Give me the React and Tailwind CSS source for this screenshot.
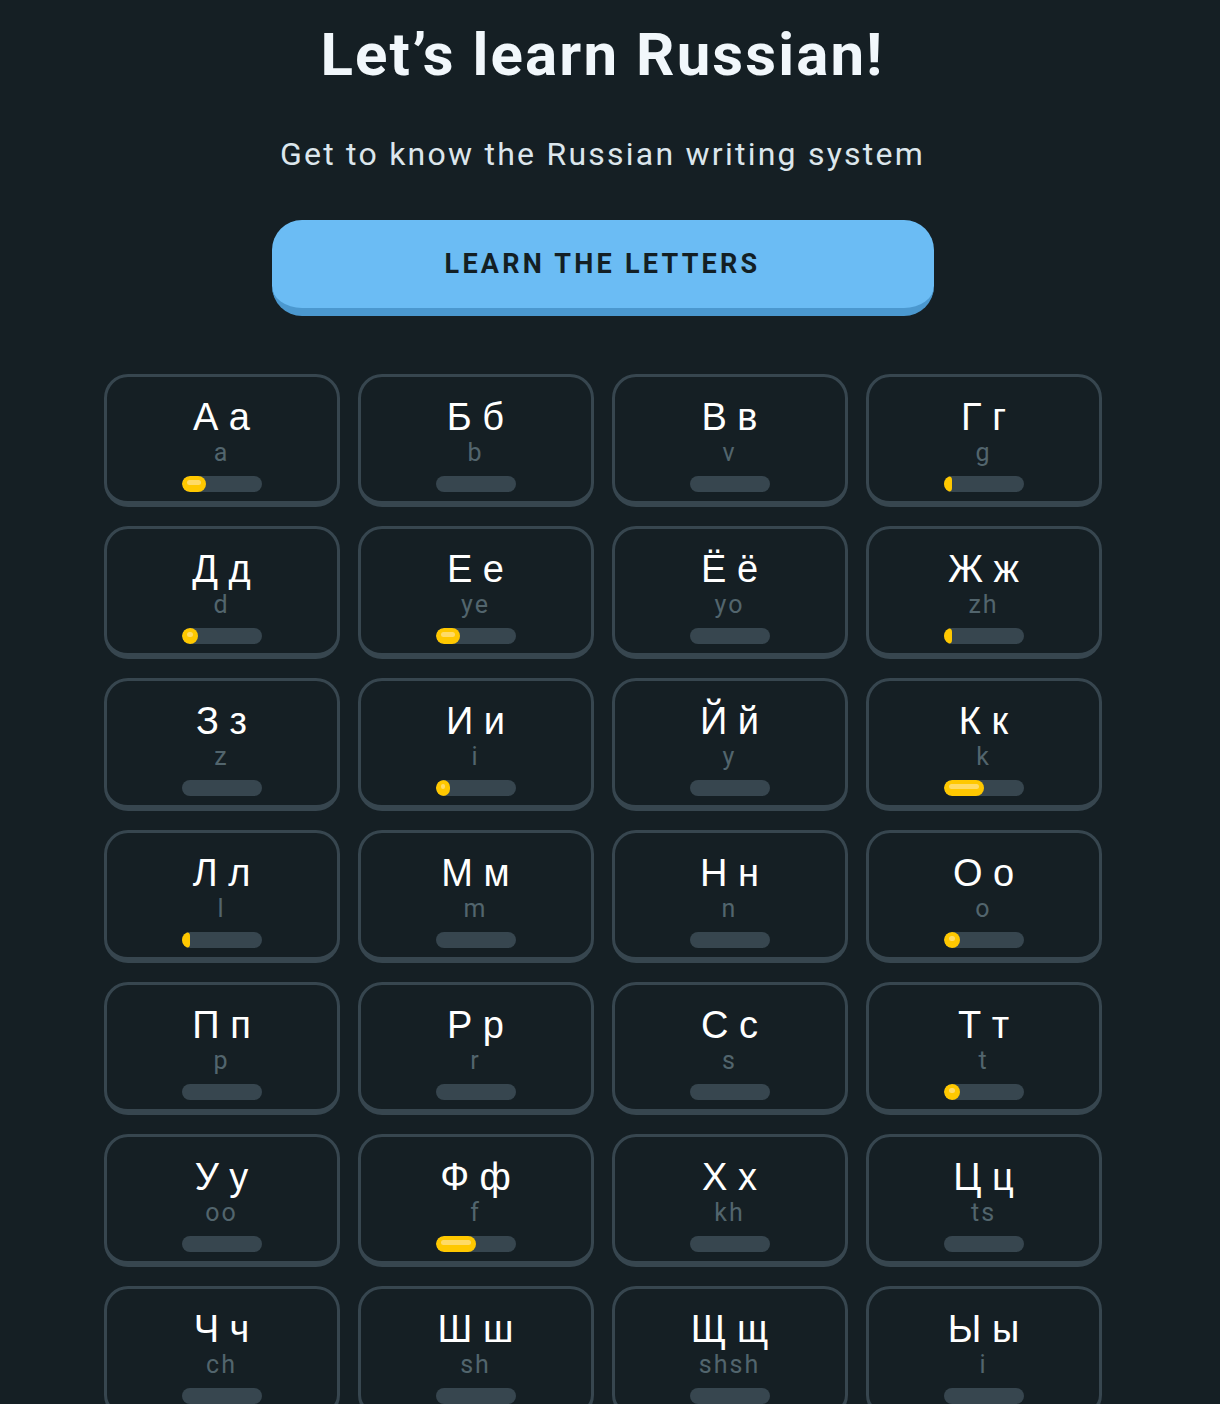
const LETTERS = [
  { glyph: 'А а', sound: 'a',    progress: 24 },
  { glyph: 'Б б', sound: 'b',    progress: 0 },
  { glyph: 'В в', sound: 'v',    progress: 0 },
  { glyph: 'Г г', sound: 'g',    progress: 8 },
  { glyph: 'Д д', sound: 'd',    progress: 16 },
  { glyph: 'Е е', sound: 'ye',   progress: 24 },
  { glyph: 'Ё ё', sound: 'yo',   progress: 0 },
  { glyph: 'Ж ж', sound: 'zh',   progress: 8 },
  { glyph: 'З з', sound: 'z',    progress: 0 },
  { glyph: 'И и', sound: 'i',    progress: 14 },
  { glyph: 'Й й', sound: 'y',    progress: 0 },
  { glyph: 'К к', sound: 'k',    progress: 40 },
  { glyph: 'Л л', sound: 'l',    progress: 8 },
  { glyph: 'М м', sound: 'm',    progress: 0 },
  { glyph: 'Н н', sound: 'n',    progress: 0 },
  { glyph: 'О о', sound: 'o',    progress: 16 },
  { glyph: 'П п', sound: 'p',    progress: 0 },
  { glyph: 'Р р', sound: 'r',    progress: 0 },
  { glyph: 'С с', sound: 's',    progress: 0 },
  { glyph: 'Т т', sound: 't',    progress: 16 },
  { glyph: 'У у', sound: 'oo',   progress: 0 },
  { glyph: 'Ф ф', sound: 'f',    progress: 40 },
  { glyph: 'Х х', sound: 'kh',   progress: 0 },
  { glyph: 'Ц ц', sound: 'ts',   progress: 0 },
  { glyph: 'Ч ч', sound: 'ch',   progress: 0 },
  { glyph: 'Ш ш', sound: 'sh',   progress: 0 },
  { glyph: 'Щ щ', sound: 'shsh', progress: 0 },
  { glyph: 'Ы ы', sound: 'i',    progress: 0 },
  { glyph: 'Ь ь', sound: '',     progress: 0 },
  { glyph: 'Ъ ъ', sound: '',     progress: 0 },
  { glyph: 'Э э', sound: 'e',    progress: 0 },
  { glyph: 'Ю ю', sound: 'yu',   progress: 0 },
  { glyph: 'Я я', sound: 'ya',   progress: 0 },
]

function ProgressBar({ value }) {
  return (
    <div className="relative w-[80px] h-[16px] rounded-full bg-[#37464f] overflow-hidden">
      {value > 0 && (
        <div
          className="absolute left-0 top-0 h-full rounded-full bg-[#ffc800]"
          style={{ width: value }}
        >
          {value > 12 && (
            <div className="mx-[5px] mt-[4px] h-[5px] rounded-full bg-[#ffdb66]" />
          )}
        </div>
      )}
    </div>
  )
}

function LetterCard({ letter }) {
  return (
    <div className="h-[133px] rounded-[24px] border-[3px] border-b-[6px] border-[#37464f] flex flex-col items-center pt-[20px]">
      <div className="text-[38px] leading-[40px] text-white font-['Liberation_Sans',sans-serif]">
        {letter.glyph}
      </div>
      <div className="mt-[2px] h-[28px] text-[25px] leading-[28px] tracking-[0.08em] text-[#52656d] font-['Roboto',sans-serif]">
        {letter.sound}
      </div>
      <div className="mt-[9px]">
        <ProgressBar value={letter.progress} />
      </div>
    </div>
  )
}

export default function App() {
  return (
    <div className="min-h-screen bg-[#151f24] pr-[15px] font-['Roboto',sans-serif]">
      <div className="flex flex-col items-center pt-[20px]">
        {/* Header */}
        <h1 className="text-[60px] leading-[70px] font-bold text-[#f1f7fb] tracking-[0.035em]">
          Let’s learn Russian!
        </h1>
        <p className="mt-[44px] text-[32px] leading-[40px] text-[#dce6ec] tracking-[0.07em]">
          Get to know the Russian writing system
        </p>

        {/* CTA */}
        <button className="mt-[46px] w-[662px] h-[96px] rounded-[30px] bg-[#6bbcf4] border-b-[8px] border-[#4b98cf] flex items-center justify-center">
          <span className="text-[27px] font-bold tracking-[0.12em] text-[#131f24]">
            LEARN THE LETTERS
          </span>
        </button>

        {/* Letter grid */}
        <div className="mt-[58px] w-[998px] grid grid-cols-4 gap-x-[18px] gap-y-[19px] pb-[40px]">
          {LETTERS.map((l) => (
            <LetterCard key={l.glyph} letter={l} />
          ))}
        </div>
      </div>
    </div>
  )
}
